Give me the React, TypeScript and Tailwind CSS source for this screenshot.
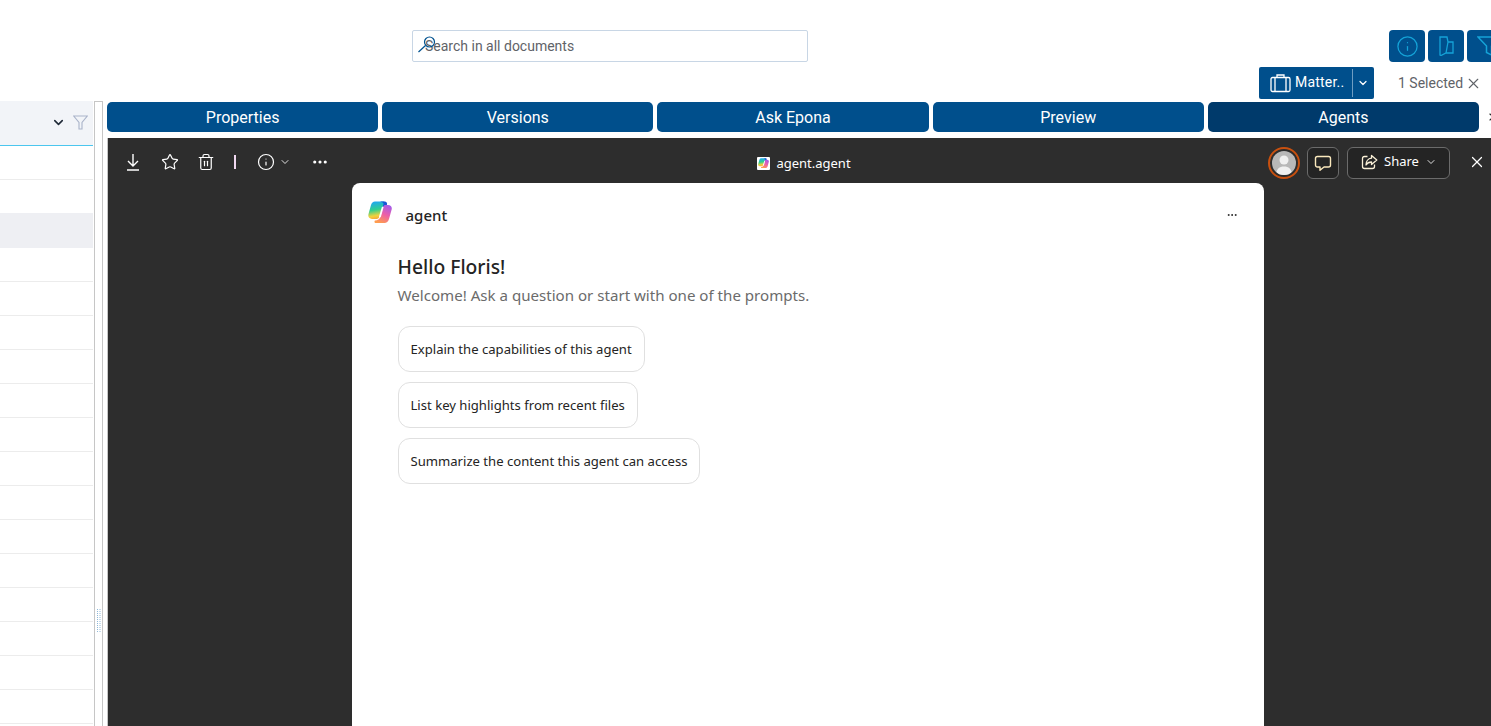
import React, { useId } from "react";
import { Info, ChevronDown, X, Star, Trash2, Ellipsis } from "lucide-react";

const Roboto = "font-['Roboto',sans-serif]";
const Seg = "font-['Noto_Sans',sans-serif]";

function CopilotLogo({ size = 24 }: { size?: number }) {
  const id = useId();
  const a = `${id}a`;
  const b = `${id}b`;
  return (
    <svg width={size} height={(size * 22) / 24} viewBox="0 0 24 22" fill="none">
      <defs>
        <linearGradient id={a} x1="6" y1="1" x2="9" y2="18" gradientUnits="userSpaceOnUse">
          <stop offset="0" stopColor="#1fa8ee" />
          <stop offset="0.45" stopColor="#2fcf8f" />
          <stop offset="0.8" stopColor="#f2d23c" />
          <stop offset="1" stopColor="#f7a63a" />
        </linearGradient>
        <linearGradient id={b} x1="20" y1="4" x2="12" y2="22" gradientUnits="userSpaceOnUse">
          <stop offset="0" stopColor="#a45bea" />
          <stop offset="0.5" stopColor="#ec5fa8" />
          <stop offset="1" stopColor="#ff9d4d" />
        </linearGradient>
      </defs>
      <path d="M7 .5H15C17 .5 17.5 2 16.500 3.500L12 15C11 17.500 9.500 18 7.500 18H4C1 18-.2 15.500.5 13L3 4C3.700 1.800 5 .5 7 .5Z" fill={`url(#${a})`} />
      <path d="M12 .5H16.500C18.500 .5 19.500 2 19 3.500L18 6H14.500L15.500 3C15.800 2 14 .8 12 .5Z" fill="#1757d6" />
      <path d="M17 4H20C23 4 24.500 6.500 23.500 9L21 18C20.300 20.500 18.500 22 16.500 22H8C6.500 22 6 20.500 7 19.500C10 19.500 11.500 18 12.300 16L15 7C15.500 5 16 4 17 4Z" fill={`url(#${b})`} />
      <path d="M13.700 6.500C14.500 5.200 15.700 5.400 15.400 6.700L13 15.500C12.400 17 10.700 17 11 15.500Z" fill="#fff" />
    </svg>
  );
}

function SquareBtn({ children }: { children: React.ReactNode }) {
  return <div className="w-9 h-8 shrink-0 rounded-[4px] bg-[#004f8c] flex items-center justify-center text-[#14a3d8]">{children}</div>;
}

function Tab({ label, active }: { label: string; active?: boolean }) {
  return (
    <div className={`flex-1 h-[30px] pt-px rounded-[5px] flex items-center justify-center text-white text-[16px] font-normal ${active ? "bg-[#003a6b]" : "bg-[#004f8c]"}`}>
      {label}
    </div>
  );
}

function Prompt({ children }: { children: React.ReactNode }) {
  return (
    <div className="h-[46px] w-fit px-3 pt-px flex items-center rounded-[12px] border border-[#e0e0e0] text-[13.1px] text-[#242424]">
      {children}
    </div>
  );
}

function GripDots() {
  const rows = Array.from({ length: 12 });
  return (
    <svg width="4" height="24" viewBox="0 0 4 24" fill="#8fb8d8">
      {rows.map((_, i) => (
        <g key={i}>
          <rect x="0" y={i * 2} width="1" height="1" />
          <rect x="2.500" y={i * 2} width="1" height="1" />
        </g>
      ))}
    </svg>
  );
}

function App() {
  const rows = Array.from({ length: 14 });
  return (
    <div className={`h-[726px] w-[1491px] overflow-hidden bg-white flex flex-col ${Roboto}`}>
      {/* Top area */}
      <div className="h-[101px] shrink-0 flex flex-col">
        <div className="h-[67px] pt-[30px] pl-[412px] flex items-start">
          <div className="w-[396px] h-8 border border-[#c8d6e5] rounded-[2px] flex items-center relative text-[14px] text-[#5f6368] pl-[12px]">
            <svg className="absolute left-[4px] top-[4px]" width="20" height="18" viewBox="0 0 20 18" fill="none" stroke="#00528f" strokeWidth="1.200">
              <circle cx="12.500" cy="7" r="5" />
              <path d="M8.500 10.500 L1.500 17" />
            </svg>
            Search in all documents
          </div>
          <div className="ml-[581px] flex gap-[3px] w-[102px] overflow-hidden">
            <SquareBtn><Info className="ml-px" size={23} strokeWidth={1.300} /></SquareBtn>
            <SquareBtn>
              <svg width="15" height="20" viewBox="0 0 15 20" fill="none" stroke="currentColor" strokeWidth="1.300">
                <path d="M1 1H8L9 6H14V17H7L2 19.500L1 19ZM7 17L9 6" />
              </svg>
            </SquareBtn>
            <SquareBtn>
              <svg className="ml-[10px] shrink-0" width="26" height="22" viewBox="0 0 26 22" fill="none" stroke="currentColor" strokeWidth="1.500">
                <path d="M1 2 H23 L14.500 11 V20 L9.500 17.500 V11 Z" />
              </svg>
            </SquareBtn>
          </div>
        </div>
        <div className="flex items-start pl-[1259px]">
          <div className="w-[115px] h-8 bg-[#004f8c] rounded-[2px] flex items-center text-white text-[14px] font-normal pb-px">
            <svg className="ml-[11px]" width="21" height="20" viewBox="0 0 21 20" fill="none" stroke="#fff" strokeWidth="1.300">
              <rect x="1" y="4.500" width="19" height="14" rx="1.500" />
              <path d="M5 4.500 V18.500 M16 4.500 V18.500 M7 4.500 V2 H14 V4.500" />
            </svg>
            <span className="ml-[4px] tracking-[0.2px]">Matter..</span>
            <span className="ml-[8px] h-[28px] w-px bg-[#6f9dc2]" />
            <ChevronDown className="ml-[4px]" size={12} strokeWidth={2.500} />
          </div>
          <div className="ml-[24px] h-8 flex items-center text-[14px] text-[#5f6368]">
            <span>1 Selected</span>
            <X className="ml-[2px]" size={17} strokeWidth={1.600} />
          </div>
        </div>
      </div>

      {/* Body */}
      <div className="flex-1 flex min-h-0">
        {/* Left list */}
        <div className="w-[93px] shrink-0 flex flex-col">
          <div className="h-[45px] shrink-0 bg-[#f2f4f8] border-b border-[#4cc6ee] flex items-center justify-end pr-[5px] pb-[1px] gap-[7px]">
            <ChevronDown size={15} strokeWidth={2.500} className="text-[#1f2937]" />
            <svg width="15" height="15" viewBox="0 0 15 15" fill="none" stroke="#a9b3c9" strokeWidth="1.100">
              <path d="M.7 1 H14.300 L9 7.500 V14 L6 14 V7.500 Z" />
            </svg>
          </div>
          <div className="h-[34px] shrink-0 border-b border-[#ececec]" />
          <div className="h-[33px] shrink-0" />
          <div className="h-[35px] shrink-0 bg-[#eeeff3]" />
          {rows.map((_, i) => (
            <div key={i} className="h-[34px] shrink-0 border-b border-[#ececec]" />
          ))}
        </div>
        {/* Splitter */}
        <div className="w-[9px] ml-px shrink-0 border-x border-t border-[#c6c6c6] flex items-end justify-center pb-[93px]">
          <GripDots />
        </div>
        {/* Right */}
        <div className="flex-1 min-w-0 pl-[4px] flex flex-col">
          <div className="h-[37px] flex shrink-0 gap-[4px] pt-px">
            <Tab label="Properties" />
            <Tab label="Versions" />
            <Tab label="Ask Epona" />
            <Tab label="Preview" />
            <Tab label="Agents" active />
            <div className="w-[8px] shrink-0 h-[30px] flex items-center pl-[4px] overflow-hidden">
              <X className="shrink-0 text-[#222222]" size={12} strokeWidth={2.200} />
            </div>
          </div>
          <div className="flex-1 bg-[#2d2d2d] border-l border-[#c6c6c6] flex flex-col items-center min-h-0">
            {/* Viewer toolbar */}
            <div className={`h-[45px] w-full shrink-0 flex items-center text-white pt-[4px] ${Seg}`}>
              <div className="w-[250px] flex items-center pl-[17px] mb-[2px]">
                <svg width="16" height="18" viewBox="0 0 16 18" fill="none" stroke="#fff" strokeWidth="1.400">
                  <path d="M8 1V13M3 8L8 13L13 8M2 17H14" />
                </svg>
                <Star className="ml-[20px]" size={18} strokeWidth={1.600} />
                <Trash2 className="ml-[18px]" size={18} strokeWidth={1.600} />
                <span className="ml-[19px] h-[14px] w-[1.500px] bg-[#f0d8f0]" />
                <Info className="ml-[21px]" size={18} strokeWidth={1.600} />
                <ChevronDown className="ml-[4px]" size={12} strokeWidth={1.700} />
                <Ellipsis className="ml-[20px]" size={18} strokeWidth={2.200} />
              </div>
              <div className="flex-1 flex items-center justify-center pr-[18px] mt-[2px] text-[13px]">
                <span className="w-[13px] h-[13px] bg-white rounded-[1px] flex items-center justify-center mr-[6px]"><CopilotLogo size={11} /></span>
                agent.agent
              </div>
              <div className="flex items-center pr-[5px]">
                <div className="w-8 h-8 rounded-full border-2 border-[#c8500f] p-[2px]">
                  <div className="w-full h-full rounded-full bg-[#b8b8b8] overflow-hidden">
                    <svg viewBox="0 0 24 24" fill="#f0f0f0"><circle cx="12" cy="9" r="4.500" /><path d="M4 24c0-6 3.500-8.500 8-8.500s8 2.500 8 8.500z" /></svg>
                  </div>
                </div>
                <div className="ml-[7px] w-8 h-8 rounded-[6px] border border-[#6b6b6b] bg-[#242424] flex items-center justify-center">
                  <svg width="18" height="18" viewBox="0 0 18 18" fill="none" stroke="#fbe9bd" strokeWidth="1.400">
                    <path d="M3.500 2.500H14.500C15.700 2.500 16.500 3.300 16.500 4.500V11C16.500 12.200 15.700 13 14.500 13H10L6 16.200V13H3.500C2.300 13 1.500 12.200 1.500 11V4.500C1.500 3.300 2.300 2.500 3.500 2.500Z" strokeLinejoin="round" />
                  </svg>
                </div>
                <div className="ml-[8px] w-[103px] h-8 rounded-[6px] border border-[#6b6b6b] bg-[#242424] flex items-center pl-[13px] pb-px text-[13px]">
                  <svg width="17" height="16" viewBox="0 0 17 16" fill="none" stroke="#fbf1d8" strokeWidth="1.300" strokeLinejoin="round">
                    <path d="M6.500 2.500H3.500C2.300 2.500 1.500 3.300 1.500 4.500V12.500C1.500 13.700 2.300 14.500 3.500 14.500H11.500C12.700 14.500 13.500 13.700 13.500 12.500V10.500" />
                    <path d="M10.500 1.500L15.800 6L10.500 10.500V8C8 8 6.300 8.800 5 11C5 7.500 7 4.500 10.500 4.200Z" />
                  </svg>
                  <span className="ml-[6px]">Share</span>
                  <ChevronDown className="ml-[6px]" size={12} strokeWidth={1.700} />
                </div>
                <X className="ml-[18px] mb-px" size={18} strokeWidth={1.600} />
              </div>
            </div>
            {/* White card */}
            <div className={`w-[912px] ml-[16px] flex-1 bg-white rounded-t-[8px] text-[#242424] ${Seg}`}>
              <div className="h-[64px] flex items-center pl-[16px] pr-[26px]">
                <span className="mb-[6px]"><CopilotLogo /></span>
                <span className="ml-[14px] text-[15px] font-medium">agent</span>
                <Ellipsis className="ml-auto" size={12} strokeWidth={2} />
              </div>
              <div className="pl-[46px]">
                <div className="text-[19.3px] font-medium leading-[24px] mt-[8px]">Hello Floris!</div>
                <div className="text-[15.1px] text-[#6b6b6b] leading-[20px] mt-[6px]">Welcome! Ask a question or start with one of the prompts.</div>
                <div className="mt-[21px] flex flex-col gap-[10px]">
                  <Prompt>Explain the capabilities of this agent</Prompt>
                  <Prompt>List key highlights from recent files</Prompt>
                  <Prompt>Summarize the content this agent can access</Prompt>
                </div>
              </div>
            </div>
          </div>
        </div>
      </div>
    </div>
  );
}

export default App;
